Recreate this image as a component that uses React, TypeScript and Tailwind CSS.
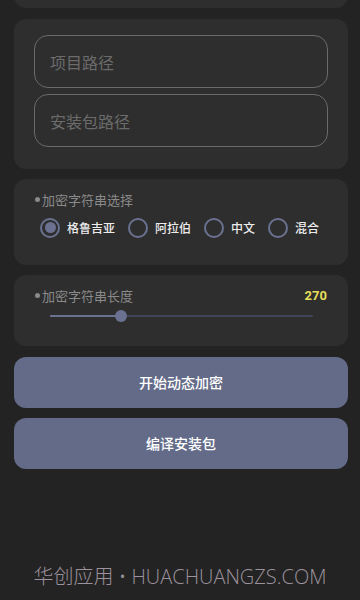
import React, { useState } from 'react';

const font = { fontFamily: '"Noto Sans CJK SC", "Noto Sans", sans-serif' };

const options = ['格鲁吉亚', '阿拉伯', '中文', '混合'];

export default function App() {
  const [selected, setSelected] = useState(0);
  const value = 270;
  const percent = 27;

  return (
    <div className="relative w-[360px] h-[600px] bg-[#232323] overflow-hidden" style={font}>
      {/* 上方被截断的卡片 */}
      <div className="ml-[14px] mr-[12px] h-[20px] -mt-[12px] rounded-b-[12px] bg-[#2e2e2e]" />

      <div className="flex flex-col gap-[10px] pl-[14px] pr-[12px] mt-[11px]">
        {/* 路径输入 */}
        <div className="rounded-[12px] bg-[#2e2e2e] px-[20px] pt-[16px] pb-[22px] flex flex-col gap-[6px]">
          <div className="h-[53px] rounded-[14px] border border-[#6a6a6a] flex items-center px-[15px] text-[16px] text-[#6b6b6b]">
            项目路径
          </div>
          <div className="h-[53px] rounded-[14px] border border-[#6a6a6a] flex items-center px-[15px] text-[16px] text-[#6b6b6b]">
            安装包路径
          </div>
        </div>

        {/* 字符串选择 */}
        <div className="rounded-[12px] bg-[#2e2e2e] h-[86px] px-[21px] pt-[11px]">
          <div className="flex items-center text-[13px] text-[#8a8a8a]">
            <span className="w-[5px] h-[5px] rounded-full bg-[#8a8a8a] mr-[2px]" />
            加密字符串选择
          </div>
          <div className="flex items-center mt-[8px] pl-[5px]">
            {options.map((opt, i) => (
              <button
                key={opt}
                onClick={() => setSelected(i)}
                className={`flex items-center gap-[7px] shrink-0 whitespace-nowrap ${i === 0 ? '' : 'ml-[13px]'}`}
              >
                <span className="w-[20px] h-[20px] rounded-full border-2 border-[#6b7190] flex items-center justify-center shrink-0">
                  {selected === i && <span className="w-[11px] h-[11px] rounded-full bg-[#6b7190]" />}
                </span>
                <span className="text-[12px] font-medium text-[#ececec]">{opt}</span>
              </button>
            ))}
          </div>
        </div>

        {/* 字符串长度 */}
        <div className="rounded-[12px] bg-[#2e2e2e] h-[71px] px-[21px] pt-[11px]">
          <div className="flex items-center justify-between">
            <div className="flex items-center text-[13px] text-[#8a8a8a]">
              <span className="w-[5px] h-[5px] rounded-full bg-[#8a8a8a] mr-[2px]" />
              加密字符串长度
            </div>
            <span className="text-[13px] font-bold text-[#e6df5a]" style={{ fontFamily: '"Roboto", sans-serif' }}>
              {value}
            </span>
          </div>
          <div className="relative mt-[4px] ml-[15px] mr-[14px] h-[12px] flex items-center">
            <div className="w-full h-[2px] bg-[#42455a] rounded-full" />
            <div className="absolute left-0 h-[2px] bg-[#6b7190] rounded-full" style={{ width: `${percent}%` }} />
            <div
              className="absolute w-[12px] h-[12px] rounded-full bg-[#6b7190] -translate-x-1/2"
              style={{ left: `${percent}%` }}
            />
          </div>
        </div>

        {/* 按钮 */}
        <button className="h-[51px] mt-[1px] rounded-[12px] bg-[#636b88] text-[14px] font-medium text-white">
          开始动态加密
        </button>
        <button className="h-[51px] rounded-[12px] bg-[#636b88] text-[14px] font-medium text-white">
          编译安装包
        </button>
      </div>

      {/* 水印 */}
      <div className="absolute left-0 right-0 bottom-[8px] text-center text-[20px] font-light text-[#9c919c] whitespace-nowrap" style={{ fontFamily: '"Open Sans", "Noto Sans CJK SC", sans-serif' }}>
        华创应用 • HUACHUANGZS.COM
      </div>
    </div>
  );
}
